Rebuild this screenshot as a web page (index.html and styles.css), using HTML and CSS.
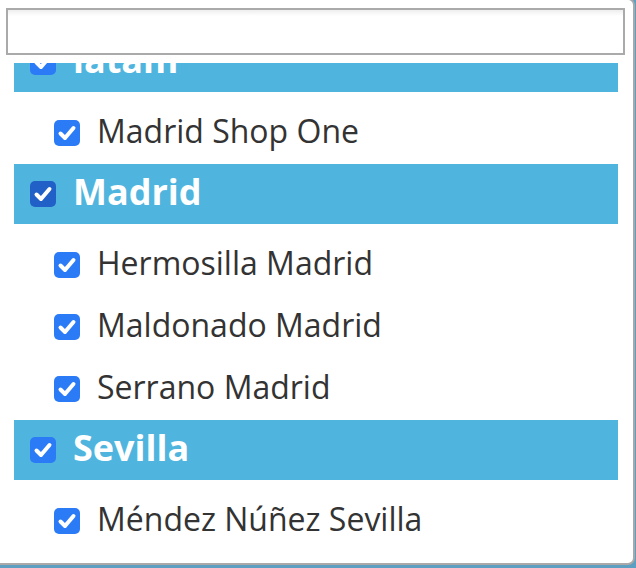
FILE: index.html
```html
<!DOCTYPE html>
<html lang="es">
<head>
<meta charset="utf-8">
<title>Tiendas</title>
<link rel="stylesheet" href="styles.css">
</head>
<body>
<div class="dropdown">
  <div class="search-wrap"><input class="search" type="text" aria-label="Buscar"></div>
  <div class="results">
    <div class="results-inner">
      <div class="group">
        <div class="group-header"><span class="cb"><svg viewBox="0 0 26 26"><path d="M6.5 13.5l4.5 4.5 8.5-10"/></svg></span><span class="label">latam</span></div>
        <ul class="items">
          <li class="item"><span class="cb"><svg viewBox="0 0 26 26"><path d="M6.5 13.5l4.5 4.5 8.5-10"/></svg></span><span class="label">Madrid Shop One</span></li>
        </ul>
      </div>
      <div class="group">
        <div class="group-header"><span class="cb cb-focus"><svg viewBox="0 0 26 26"><path d="M6.5 13.5l4.5 4.5 8.5-10"/></svg></span><span class="label">Madrid</span></div>
        <ul class="items">
          <li class="item"><span class="cb"><svg viewBox="0 0 26 26"><path d="M6.5 13.5l4.5 4.5 8.5-10"/></svg></span><span class="label">Hermosilla Madrid</span></li>
          <li class="item"><span class="cb"><svg viewBox="0 0 26 26"><path d="M6.5 13.5l4.5 4.5 8.5-10"/></svg></span><span class="label">Maldonado Madrid</span></li>
          <li class="item"><span class="cb"><svg viewBox="0 0 26 26"><path d="M6.5 13.5l4.5 4.5 8.5-10"/></svg></span><span class="label">Serrano Madrid</span></li>
        </ul>
      </div>
      <div class="group">
        <div class="group-header"><span class="cb"><svg viewBox="0 0 26 26"><path d="M6.5 13.5l4.5 4.5 8.5-10"/></svg></span><span class="label">Sevilla</span></div>
        <ul class="items">
          <li class="item"><span class="cb"><svg viewBox="0 0 26 26"><path d="M6.5 13.5l4.5 4.5 8.5-10"/></svg></span><span class="label">Méndez Núñez Sevilla</span></li>
        </ul>
      </div>
    </div>
  </div>
</div>
</body>
</html>
```
FILE: styles.css
```css
* { box-sizing: border-box; }
html, body { margin: 0; padding: 0; }
body {
  width: 636px;
  height: 568px;
  overflow: hidden;
  background: #5c9fc1;
  font-family: "Open Sans", "DejaVu Sans", sans-serif;
}
.dropdown {
  width: 637px;
  height: 567px;
  margin: -2px 0 0 -2px;
  background: #fff;
  border: 2px solid #a9a9a9;
  border-radius: 0 7px 7px 0;
  padding: 8px 0 0 0;
  display: flex;
  flex-direction: column;
}
.search-wrap {
  padding-left: 6px;
}
.search {
  display: block;
  width: 619px;
  height: 47px;
  margin: 0;
  border: 2px solid #aaa;
  background: linear-gradient(#eeeeee 0, #fff 6px, #fff 100%);
  outline: none;
  font-family: inherit;
  font-size: 28px;
}
.results {
  margin: 8px 0 0 14px;
  width: 604px;
  flex: 1;
  overflow: hidden;
}
.results-inner {
  margin-top: -31px;
}
.group-header {
  height: 60px;
  background: #4fb5de;
  color: #fff;
  font-weight: 700;
  font-size: 36px;
  display: flex;
  align-items: center;
  padding-left: 16px;
  gap: 17px;
  line-height: 1;
}
.items {
  list-style: none;
  margin: 0;
  padding: 10px 0 0 0;
}
.item {
  height: 62px;
  display: flex;
  align-items: center;
  padding-left: 40px;
  gap: 17px;
  font-size: 32px;
  color: #333;
  line-height: 1;
}
.label {
  padding-bottom: 4px;
}
.cb {
  flex: none;
  width: 26px;
  height: 26px;
  border-radius: 5px;
  background: #2c7bf6;
  display: flex;
}
.cb-focus {
  background: #2160c6;
}
.cb svg {
  width: 26px;
  height: 26px;
}
.cb path {
  fill: none;
  stroke: #fff;
  stroke-width: 4;
  stroke-linecap: round;
  stroke-linejoin: round;
}
```
